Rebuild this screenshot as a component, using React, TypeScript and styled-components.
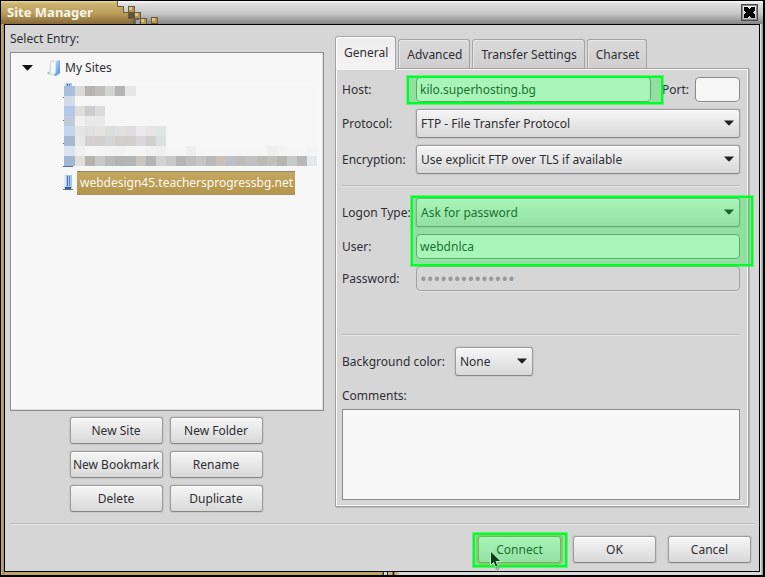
import React from "react";
import styled, { createGlobalStyle, css } from "styled-components";

const GlobalStyle = createGlobalStyle`
  *, *::before, *::after { box-sizing: border-box; }
  body { margin: 0; background: #000; }
  body, button, input, select, textarea {
    font-family: "Noto Sans", sans-serif;
    font-size: 12px;
    line-height: 18px;
    color: #2f2f33;
  }
`;

/* ---------- window frame ---------- */

const Desktop = styled.div`
  min-height: 100vh;
  display: flex;
  padding: 1px 2px 2px 1px;
  background: #000;
`;

const Frame = styled.div`
  position: relative;
  flex: 1;
  display: flex;
  flex-direction: column;
  padding: 0 3px 3px;
  background: linear-gradient(90deg, #c9b06a 0, #a58a4a 3px, #bfa55f 4px, #bfa55f 50%, #d8d8d8 50%, #d8d8d8 calc(100% - 3px), #efefef calc(100% - 3px), #8c8c8c 100%);
`;

const BottomNotch = styled.svg`
  position: absolute;
  left: 50%;
  bottom: 0;
`;

const TitleBar = styled.header`
  display: flex;
  align-items: stretch;
  height: 23px;
  margin: 0 -3px;
  background: linear-gradient(#fafafa 0, #dedede 3px, #c6c6c6 55%, #858585 100%);
`;

const TitleTab = styled.h1`
  margin: 0;
  padding: 0 0 0 6px;
  width: 116px;
  font-size: 13px;
  line-height: 23px;
  font-weight: 700;
  color: #f6f3ea;
  background: linear-gradient(#e6d49c 0, #cbb370 3px, #b89c58 55%, #86693a 100%);
`;

const CloseButton = styled.button`
  display: flex;
  align-items: center;
  justify-content: center;
  width: 17px;
  height: 17px;
  margin: 3px 5px 3px auto;
  padding: 0;
  border: 1px solid #4a4a4a;
  box-shadow: inset 0 0 0 1px #8c8c8c;
  background: linear-gradient(#f8f8f8, #bcbcbc);
`;

const Content = styled.main`
  flex: 1;
  display: flex;
  flex-direction: column;
  border: 1px solid #000;
  padding: 5px;
  background: #d6d6d6;
`;

const Columns = styled.div`
  flex: 1;
  display: grid;
  grid-template-columns: 314fr 414fr;
  gap: 11px;
  padding-right: 5px;
`;

/* ---------- shared controls ---------- */

const raised = css`
  border: 1px solid #9c9c9c;
  border-bottom-color: #868686;
  border-radius: 3px;
  background: linear-gradient(#f6f6f6, #d8d8d8);
  box-shadow: inset 0 1px 0 #fff, 0 0 1px 1px rgba(0, 0, 0, 0.07);
`;

const Button = styled.button<{ $default?: boolean }>`
  ${raised}
  height: 27px;
  padding: 0;
  white-space: nowrap;
  ${(p) => p.$default && css`border-color: #a89a68; box-shadow: 0 0 0 2px #c3b88f;`}
`;

const TextField = styled.input`
  width: 100%;
  height: 25px;
  padding: 0 3px 1px;
  border: 1px solid #8a8a8a;
  border-radius: 4px;
  background: #f6f6f6;
  box-shadow: 0 1px 0 #e2e2e2;
  &[type="password"] {
    font-size: 18px;
  }
  &:disabled {
    color: #999;
    background: #d6d6d6;
    border-color: #a2a2a2;
  }
`;

const SelectBox = styled.div<{ $narrow?: boolean }>`
  position: relative;
  width: ${(p) => (p.$narrow ? "78px" : "100%")};
  svg {
    position: absolute;
    right: 6px;
    top: 11px;
    pointer-events: none;
  }
  select {
    ${raised}
    display: block;
    appearance: none;
    width: 100%;
    height: 29px;
    padding: 0 24px 0 4px;
  }
`;

const Rule = styled.hr`
  margin: 0;
  height: 2px;
  border: 0;
  border-top: 1px solid #bcbcbc;
  background: #e6e6e6;
`;

const Marked = styled.div<{ $inset: string }>`
  position: relative;
  &::after {
    content: "";
    position: absolute;
    inset: ${(p) => p.$inset};
    border: 2px solid #00ff28;
    outline: 1px solid rgba(0, 255, 40, 0.5);
    background: rgba(0, 247, 50, 0.32);
    pointer-events: none;
    z-index: 1;
  }
`;

/* ---------- left column ---------- */

const LeftColumn = styled.section`
  display: flex;
  flex-direction: column;
`;

const ListLabel = styled.h2`
  margin: 0 0 4px;
  font-size: 12px;
  font-weight: 400;
`;

const Tree = styled.ul`
  position: relative;
  flex: 1;
  margin: 0;
  padding: 3px 10px;
  list-style: none;
  border: 1px solid #8c8c8c;
  background: #f7f7f7;
  box-shadow: inset -1px -1px 0 #e0e0e0, inset 1px 1px 0 #fff;
`;

const TreeRow = styled.li<{ $child?: boolean }>`
  display: flex;
  align-items: center;
  gap: ${(p) => (p.$child ? "3px" : "4px")};
  height: 23px;
  padding-left: ${(p) => (p.$child ? "41px" : "0")};
`;

const Selected = styled.span`
  padding: 0 2px 1px 3px;
  line-height: 21px;
  color: #fbf8ee;
  white-space: nowrap;
  background: linear-gradient(#c4a761, #b3954e);
  border-top: 1px solid #8f8668;
  box-shadow: 0 1px 0 #a3926a;
`;

const Redaction = styled.svg`
  position: absolute;
  left: 53px;
  top: 33px;
`;

const SiteButtons = styled.div`
  display: grid;
  grid-template-columns: 93px 93px;
  justify-content: center;
  gap: 7px;
  padding: 6px 2px 11px 0;
`;

/* ---------- right column ---------- */

const RightColumn = styled.section`
  display: flex;
  flex-direction: column;
  padding: 6px 0 16px;
`;

const Tabs = styled.div`
  display: flex;
  align-items: flex-end;
  gap: 2px;
`;

const Tab = styled.button<{ $active?: boolean }>`
  position: relative;
  height: ${(p) => (p.$active ? "34px" : "29px")};
  padding: 2px 7px 0 8px;
  white-space: nowrap;
  border: 1px solid #a4a4a4;
  border-bottom: 0;
  border-radius: 3px 3px 0 0;
  box-shadow: inset 1px 1px 0 #e8e8e8;
  background: linear-gradient(#dadada, #cecece);
  ${(p) =>
    p.$active &&
    css`
      padding: 0 7px 1px 8px;
      margin-bottom: -2px;
      z-index: 1;
      background: linear-gradient(#ededed, #f4f4f4);
      box-shadow: inset 1px 1px 0 #fff;
    `}
`;

const Panel = styled.div`
  flex: 1;
  display: flex;
  flex-direction: column;
  border: 1px solid #a0a0a0;
  padding: 8px 8px 6px 6px;
  box-shadow: inset 0 0 0 1px #fafafa, 1px 1px 0 #b8b8b8;
`;

const Fields = styled.div<{ $gap: number }>`
  display: grid;
  gap: ${(p) => p.$gap}px;
`;

const Field = styled.div`
  display: grid;
  grid-template-columns: 74px 1fr;
  align-items: center;
  label { white-space: nowrap; }
`;

const HostRow = styled.div`
  display: grid;
  grid-template-columns: 74px 1fr 44px 45px;
  align-items: center;
`;

const PortLabel = styled.label`
  padding-left: 11px;
`;

const LogonRule = styled(Rule)`
  margin: 11px 0;
`;

const ColorRule = styled(Rule)`
  margin: 43px 0 11px;
`;

const ColorRow = styled.div`
  display: flex;
  align-items: center;
  gap: 10px;
`;

const CommentsLabel = styled.label`
  margin: 11px 0 4px;
`;

const Comments = styled.textarea`
  flex: 1;
  display: block;
  width: 100%;
  min-height: 60px;
  resize: none;
  border: 1px solid #8c8c8c;
  background: #f7f7f7;
`;

/* ---------- footer ---------- */

const Footer = styled.footer`
  display: grid;
  grid-template-columns: 83px 83px 83px;
  justify-content: end;
  gap: 12px;
  padding: 11px 3px 3px;
`;

const Connect = styled(Marked)`
  display: grid;
`;

const Pointer = styled.svg`
  position: absolute;
  left: 12px;
  top: 14px;
  z-index: 2;
  pointer-events: none;
`;

const Arrow = () => (
  <svg width="10" height="6" viewBox="0 0 10 6" aria-hidden="true">
    <path d="M0 .5h10L5.8 5q-.8.8-1.6 0z" fill="#222" />
  </svg>
);

const TitleSteps = () => (
  <svg width="46" height="23" viewBox="0 0 46 23" aria-hidden="true">
    <defs>
      <linearGradient id="gold" x1="0" y1="0" x2="0" y2="23" gradientUnits="userSpaceOnUse">
        <stop offset="0" stopColor="#e6d49c" />
        <stop offset=".13" stopColor="#cbb370" />
        <stop offset=".55" stopColor="#b89c58" />
        <stop offset="1" stopColor="#86693a" />
      </linearGradient>
    </defs>
    <path d="M0 0h1v5h6v6h5v6h5v6H0z" fill="url(#gold)" />
    <path d="M.5 0v5.5h6v6h5v6h5V23" fill="none" stroke="#6e5a30" />
    <path d="M12 12h5v5h-5z" fill="#5d5340" />
    <path d="M17 18h5v5h-5z" fill="#6a6a6a" />
    <path d="M19 19h3v4h-3z" fill="#a5a5a5" />
    {[[11, 5], [17, 11], [23, 17], [34, 16]].map(([x, y]) => (
      <g key={x}>
        <rect x={x} y={y} width="7" height="7" fill="#6e5a30" />
        <rect x={x + 1} y={y + 1} width="5" height="5" fill="#b0945a" />
        <rect x={x + 1} y={y + 1} width="3" height="3" fill="#d8c48a" />
      </g>
    ))}
  </svg>
);

const FolderIcon = () => (
  <svg width="14" height="16" viewBox="0 0 14 16" aria-hidden="true">
    <defs>
      <linearGradient id="folder" x1="0" y1="0" x2="1" y2="1">
        <stop offset="0" stopColor="#d8eaf8" />
        <stop offset="1" stopColor="#3f84d8" />
      </linearGradient>
    </defs>
    <path d="M0 13l3-2v4z" fill="#aab4bd" />
    <path d="M3 1l4-1v15l-5 0z" fill="#cfdde6" />
    <path d="M4 2h4v11l-4 1z" fill="#f2f7fa" />
    <path d="M8 1l5-1v13l-4 3H7l1-3z" fill="url(#folder)" />
    <path d="M8 1v12" stroke="#fff" />
  </svg>
);

const ServerIcon = () => (
  <svg width="12" height="16" viewBox="0 0 12 16" aria-hidden="true">
    <rect x="2" y="0" width="8" height="13" fill="#a9c5ea" />
    <rect x="2" y="0" width="2" height="12" fill="#dbe8f7" />
    <rect x="5" y="1" width="1" height="10" fill="#4d72aa" />
    <rect x="7" y="1" width="1" height="10" fill="#5f86bd" />
    <path d="M3 12h6v2H3z" fill="#33547f" />
    <path d="M1 14h4v-1h2v1h4v1H1z" fill="#56709a" />
  </svg>
);

const mosaic: string[][] = [
  ["#a9bedd", "#dcdad7", "#b5b4b3", "#bfbebd", "#d2d4d3", "#b5b5b5", "#e5e6e8"],
  ["#d3dbe7"],
  ["#b1c8e7", "#dfdedc", "#cccdce", "#dadada"],
  ["#c0cadb", "#f0f0f0", "#e8e8e8", "#e9e9e9"],
  ["#c4d5ed", "#e5e4e2", "#e0e0e0", "#e5e3e0", "#dbdedf", "#e0e0e0", "#dedede", "#e9e9e9", "#e3e4e3", "#e0e4e2"],
  ["#a9b7d1", "#e8e8e8", "#d3d0cf", "#d0cfce", "#d4d5d7", "#d2cfcd", "#d0cfce", "#d7d7dc", "#d3cfcf", "#dce0e0"],
  ["#dae4f0", "#f0f0f0", "#f5f5f5", "#f5f5f5", "#f2f2f2", "#f2f2f2", "#f5f5f5", "#f5f5f5", "#f2f2f2", "#eeeeee", "#f5f5f5", "#f5f5f5", "#eeeeee", "#f5f5f5", "#f5f5f5", "#f5f5f5", "#f5f5f5", "#f5f5f5", "#f5f5f5", "#f5f5f5", "#eeeeee", "#f3f3f3", "#f5f5f5", "#f5f5f5", "#f3f3f3"],
  ["#a3b7d4", "#dfdedb", "#b7b4b0", "#c8cac8", "#b9bbbb", "#b3b4b4", "#b4b5b5", "#c8c5c0", "#b2b4b6", "#d2d2d2", "#c8c8c6", "#b5b5b5", "#c0bfbe", "#c5c5c5", "#b9b9b9", "#c8c1bb", "#bbc0c7", "#bebdba", "#c0c0c0", "#bcbbba", "#c0c0bf", "#b7b5b2", "#c7c9cb", "#b8b8b8", "#e5e8eb"],
];

const Mosaic = () => (
  <Redaction width="253" height="80" viewBox="0 0 251 80" preserveAspectRatio="none" aria-hidden="true">
    <rect width="251" height="80" fill="#f6f6f6" />
    {mosaic.map((row, y) =>
      row.map((fill, x) => (
        <rect key={`${x}-${y}`} x={x ? x * 10 + 1 : 0} y={y * 10} width={x ? 10 : 11} height="10" fill={fill} shapeRendering="crispEdges" />
      ))
    )}
  </Redaction>
);

export default function App() {
  return (
    <>
      <GlobalStyle />
      <Desktop>
        <Frame>
          <TitleBar>
            <TitleTab>Site Manager</TitleTab>
            <TitleSteps />
            <CloseButton aria-label="Close">
              <svg width="11" height="11" viewBox="0 0 11 11" aria-hidden="true">
                <path d="M0 0h4v1h1v1h1V1h1V0h4v4h-1v1H9v1h1v1h1v4H7v-1H6V9H5v1H4v1H0V7h1V6h1V5H1V4H0z" fill="#000" />
              </svg>
            </CloseButton>
          </TitleBar>
          <Content>
            <Columns>
              <LeftColumn>
                <ListLabel id="entries">Select Entry:</ListLabel>
                <Tree aria-labelledby="entries">
                  <TreeRow>
                    <svg width="22" height="6" viewBox="0 0 22 6" aria-hidden="true">
                      <path d="M1 0h11L7.3 5q-.8.8-1.6 0z" fill="#111" />
                    </svg>
                    <FolderIcon />
                    <span>My Sites</span>
                  </TreeRow>
                  {[0, 1, 2, 3].map((n) => (
                    <TreeRow $child key={n}>
                      <ServerIcon />
                    </TreeRow>
                  ))}
                  <TreeRow $child>
                    <ServerIcon />
                    <Selected>webdesign45.teachersprogressbg.net</Selected>
                  </TreeRow>
                  <Mosaic />
                </Tree>
                <SiteButtons>
                  <Button>New Site</Button>
                  <Button>New Folder</Button>
                  <Button>New Bookmark</Button>
                  <Button>Rename</Button>
                  <Button>Delete</Button>
                  <Button>Duplicate</Button>
                </SiteButtons>
              </LeftColumn>
              <RightColumn>
                <Tabs role="tablist">
                  <Tab role="tab" aria-selected="true" $active>General</Tab>
                  <Tab role="tab">Advanced</Tab>
                  <Tab role="tab">Transfer Settings</Tab>
                  <Tab role="tab">Charset</Tab>
                </Tabs>
                <Panel role="tabpanel">
                  <Fields $gap={7}>
                    <HostRow>
                      <label htmlFor="host">Host:</label>
                      <Marked $inset="-1px -12px -2px -9px">
                        <TextField id="host" defaultValue="kilo.superhosting.bg" />
                      </Marked>
                      <PortLabel htmlFor="port">Port:</PortLabel>
                      <TextField id="port" />
                    </HostRow>
                    <Field>
                      <label htmlFor="protocol">Protocol:</label>
                      <SelectBox>
                        <select id="protocol"><option>FTP - File Transfer Protocol</option></select>
                        <Arrow />
                      </SelectBox>
                    </Field>
                    <Field>
                      <label htmlFor="encryption">Encryption:</label>
                      <SelectBox>
                        <select id="encryption"><option>Use explicit FTP over TLS if available</option></select>
                        <Arrow />
                      </SelectBox>
                    </Field>
                  </Fields>
                  <LogonRule />
                  <Fields $gap={7}>
                    <Marked $inset="-2px -13px -7px 69px">
                      <Fields $gap={7}>
                        <Field>
                          <label htmlFor="logon">Logon Type:</label>
                          <SelectBox>
                            <select id="logon"><option>Ask for password</option></select>
                            <Arrow />
                          </SelectBox>
                        </Field>
                        <Field>
                          <label htmlFor="user">User:</label>
                          <TextField id="user" defaultValue="webdnlca" />
                        </Field>
                      </Fields>
                    </Marked>
                    <Field>
                      <label htmlFor="password">Password:</label>
                      <TextField id="password" type="password" defaultValue="aaaaaaaaaaaaaa" disabled />
                    </Field>
                  </Fields>
                  <ColorRule />
                  <ColorRow>
                    <label htmlFor="color">Background color:</label>
                    <SelectBox $narrow>
                      <select id="color"><option>None</option></select>
                      <Arrow />
                    </SelectBox>
                  </ColorRow>
                  <CommentsLabel htmlFor="comments">Comments:</CommentsLabel>
                  <Comments id="comments" />
                </Panel>
              </RightColumn>
            </Columns>
            <Rule />
            <Footer>
              <Connect $inset="-3px -6px -4px -5px">
                <Button $default>Connect</Button>
                <Pointer width="15" height="21" viewBox="0 0 15 21" aria-hidden="true">
                  <path d="M.5 1v14.5l3-3 2 4.5 2.6-1-2-4.500h5z" fill="#0b3d18" stroke="#b9efc4" />
                  <circle cx="7.500" cy="18" r="1.500" fill="none" stroke="#6f8f76" />
                </Pointer>
              </Connect>
              <Button>OK</Button>
              <Button>Cancel</Button>
            </Footer>
          </Content>
          <BottomNotch width="20" height="3" viewBox="0 0 20 3" aria-hidden="true">
            <path d="M0 0h20v3H0z" fill="#777" />
            <path d="M1 0h1v3H1zM5 0h1v3H5zM11 0h1v3h-1z" fill="#222" />
            <path d="M6 0h4v3H6zM13 0h4v3h-4z" fill="#cdb674" />
            <path d="M2 0h3v3H2zM17 0h3v3h-3z" fill="#d8d8d8" />
          </BottomNotch>
        </Frame>
      </Desktop>
    </>
  );
}
